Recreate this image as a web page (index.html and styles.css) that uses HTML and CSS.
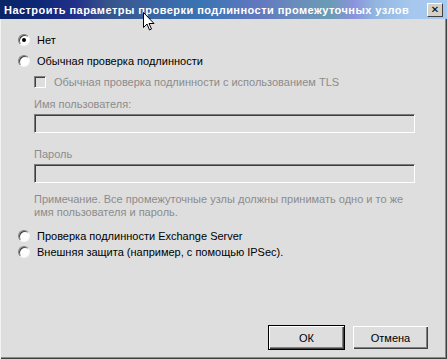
FILE: index.html
```html
<!DOCTYPE html>
<html lang="ru">
<head>
  <meta charset="UTF-8">
  <title>Настроить параметры проверки подлинности</title>
  <link rel="stylesheet" href="styles.css">
</head>
<body>
  <div class="dialog">
    <div class="titlebar">
      <div class="title">Настроить параметры проверки подлинности промежуточных узлов</div>
      <div class="caption-buttons">
        <div class="close-btn"><span class="close-x">✕</span></div>
      </div>
      <svg class="cursor" width="12" height="20" viewBox="0 0 12 20"><path d="M0.5 0.5v15l3.5-3.5 2.5 6 2-1-2.5-5.5h5z" fill="#fff" stroke="#000" stroke-width="1"/></svg>
    </div>

    <div class="content">
      <div class="radio-row first">
        <span class="radio checked"></span>
        <span>Нет</span>
      </div>
      <div class="radio-row">
        <span class="radio"></span>
        <span>Обычная проверка подлинности</span>
      </div>

      <div class="sub">
        <div class="check-row">
          <span class="checkbox"></span>
          <span>Обычная проверка подлинности с использованием TLS</span>
        </div>

        <div class="field-label first-field">Имя пользователя:</div>
        <div class="textbox"></div>

        <div class="field-label">Пароль</div>
        <div class="textbox"></div>

        <p class="note">Примечание. Все промежуточные узлы должны принимать одно и то же<br>имя пользователя и пароль.</p>
      </div>

      <div class="radio-row tight gap">
        <span class="radio"></span>
        <span>Проверка подлинности Exchange Server</span>
      </div>
      <div class="radio-row tight">
        <span class="radio"></span>
        <span>Внешняя защита (например, с помощью IPSec).</span>
      </div>
    </div>

    <div class="buttons">
      <button class="btn default">ОК</button>
      <button class="btn">Отмена</button>
    </div>
  </div>
</body>
</html>
```

FILE: styles.css
```css
html, body {
  margin: 0;
  padding: 0;
}

body {
  width: 447px;
  height: 359px;
  overflow: hidden;
  font-family: "Liberation Sans", Arial, sans-serif;
  font-size: 11px;
  color: #000;
}

.dialog {
  position: relative;
  width: 447px;
  height: 359px;
  background: #dedede;
  box-shadow: inset 1px 0 0 #f2f2f2, inset -1px -1px 0 #404040, inset -2px -2px 0 #8a8a8a;
  box-sizing: border-box;
}

.titlebar {
  position: relative;
  height: 19px;
  box-sizing: border-box;
  display: flex;
  align-items: center;
  justify-content: space-between;
  padding: 0 4px;
  background: linear-gradient(to right,
    #0a2466 0%, #0e2878 9%, #22308a 17%, #36548a 24%,
    #3a62a0 33%, #3a74b4 45%, #6278c0 58%, #6a8cbc 66%,
    #6a9cb4 74%, #8a92dc 79%, #92b6e0 84%, #a6c8ee 92%, #a8caf0 100%);
}

.title {
  color: #fff;
  font-weight: bold;
  font-size: 11px;
  letter-spacing: 0.45px;
  white-space: nowrap;
}

.caption-buttons {
  display: flex;
  align-items: center;
  height: 19px;
}

.close-btn {
  width: 16px;
  height: 14px;
  box-sizing: border-box;
  border-style: solid;
  border-width: 1px;
  border-color: #ffffff #404040 #404040 #ffffff;
  background: #d4d0c8;
  display: flex;
  align-items: center;
  justify-content: center;
}

.close-x {
  font-family: "DejaVu Sans", sans-serif;
  font-size: 10px;
  font-weight: bold;
  line-height: 10px;
  color: #000;
}

.cursor {
  position: absolute;
  left: 143px;
  top: 12px;
}

.content {
  padding: 0 0 0 18px;
}

.radio-row {
  display: flex;
  align-items: center;
  height: 16px;
  margin-top: 5px;
}

.radio-row.first {
  margin-top: 13px;
}

.radio-row.tight {
  margin-top: 0;
}

.radio-row.gap {
  margin-top: 9px;
}

.radio {
  width: 12px;
  height: 12px;
  box-sizing: border-box;
  border-radius: 50%;
  background: #fff;
  border: 1px solid;
  border-color: #808080 #f4f4f4 #f4f4f4 #808080;
  box-shadow: inset 1px 1px 0 #404040;
  margin-right: 7px;
  display: flex;
  align-items: center;
  justify-content: center;
}

.radio.checked::after {
  content: "";
  width: 4px;
  height: 4px;
  border-radius: 50%;
  background: #000;
}

.sub {
  padding-left: 16px;
  color: #8c8c8c;
}

.check-row {
  display: flex;
  align-items: center;
  height: 16px;
  margin-top: 5px;
}

.checkbox {
  width: 12px;
  height: 12px;
  box-sizing: border-box;
  border: 1px solid;
  border-color: #808080 #fff #fff #808080;
  box-shadow: inset 1px 1px 0 #404040;
  background: #dedede;
  margin-right: 8px;
}

.field-label {
  line-height: 14px;
  margin-top: 14px;
}

.field-label.first-field {
  margin-top: 7px;
}

.textbox {
  width: 381px;
  height: 19px;
  box-sizing: border-box;
  margin-top: 3px;
  background: #dedede;
  border: 1px solid;
  border-color: #7a7a7a #fff #fff #7a7a7a;
  box-shadow: inset 1px 1px 0 #3c3c3c;
}

.note {
  margin: 10px 0 0;
  line-height: 13px;
}

.buttons {
  position: absolute;
  right: 19px;
  bottom: 10px;
  display: flex;
  gap: 9px;
}

.btn {
  width: 75px;
  height: 23px;
  font-family: "Liberation Sans", Arial, sans-serif;
  font-size: 11px;
  color: #000;
  background: #dedede;
  border: none;
  padding: 0;
  box-shadow: inset 1px 1px 0 #fff, inset -1px -1px 0 #404040, inset -2px -2px 0 #808080;
}

.btn.default {
  box-shadow: 0 0 0 1px #000, inset 1px 1px 0 #fff, inset -1px -1px 0 #404040, inset -2px -2px 0 #808080;
}
```
